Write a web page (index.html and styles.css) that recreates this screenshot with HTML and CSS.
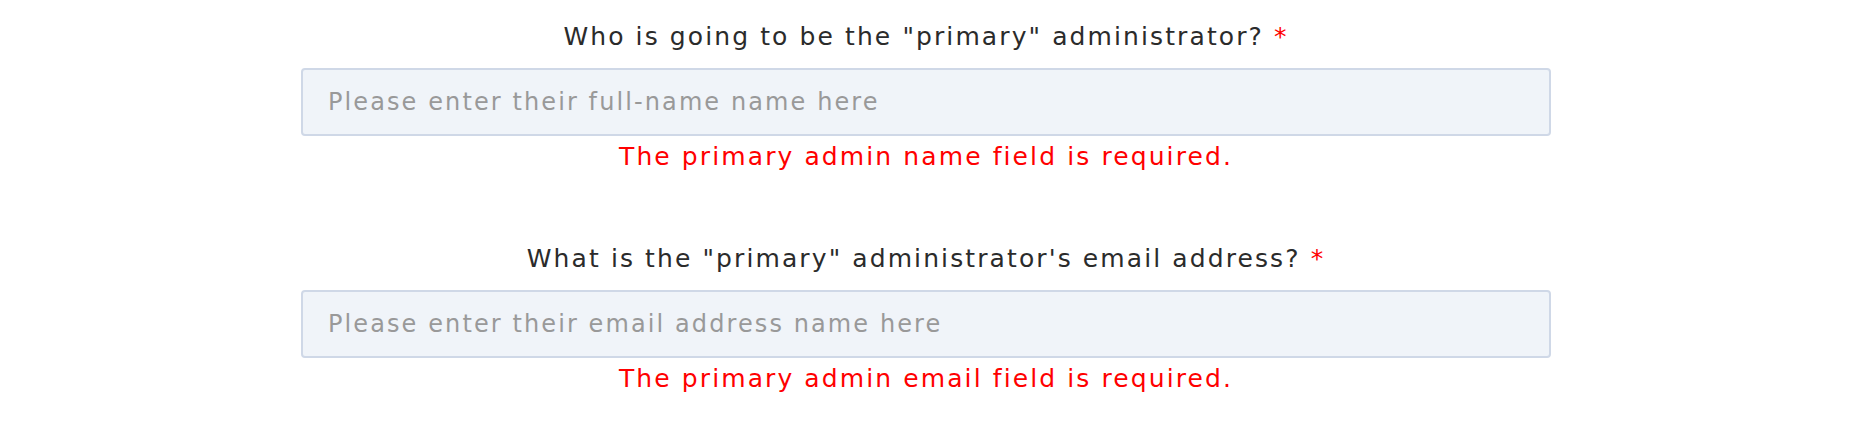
FILE: index.html
```html
<!DOCTYPE html>
<html lang="en">
<head>
<meta charset="utf-8">
<title>Administrator</title>
<link rel="stylesheet" href="styles.css">
</head>
<body>
<div class="page">
  <form class="form">
    <div class="field">
      <label class="label" for="name">Who is going to be the "primary" administrator? <span class="req">*</span></label>
      <input class="input" id="name" type="text" placeholder="Please enter their full-name name here">
      <div class="error">The primary admin name field is required.</div>
    </div>
    <div class="field">
      <label class="label" for="email">What is the "primary" administrator's email address? <span class="req">*</span></label>
      <input class="input" id="email" type="text" placeholder="Please enter their email address name here">
      <div class="error">The primary admin email field is required.</div>
    </div>
  </form>
</div>
</body>
</html>
```
FILE: styles.css
```css
html, body {
  margin: 0;
  background: #ffffff;
}
.page {
  padding: 22px 18px 0 0;
  font-family: "DejaVu Sans", "Open Sans", sans-serif;
}
.form {
  width: 1250px;
  margin: 0 auto;
}
.field {
  display: flex;
  flex-direction: column;
  align-items: center;
  margin-bottom: 72px;
}
.field:last-child {
  margin-bottom: 0;
}
.label {
  display: block;
  font-size: 25px;
  line-height: 30px;
  letter-spacing: 2.1px;
  color: #2b2b2b;
  margin-bottom: 16px;
}
.req {
  color: #ff0000;
}
.input {
  box-sizing: border-box;
  width: 100%;
  height: 68px;
  padding: 0 25px;
  background: #f0f4f9;
  border: 2px solid #cfd8e7;
  border-radius: 4px;
  font-family: inherit;
  font-size: 24px;
  letter-spacing: 2.1px;
  color: #333;
  outline: none;
}
.input::placeholder {
  color: #999999;
}
.error {
  margin-top: 6px;
  font-size: 25px;
  line-height: 30px;
  letter-spacing: 2.1px;
  color: #ff0000;
}
```
